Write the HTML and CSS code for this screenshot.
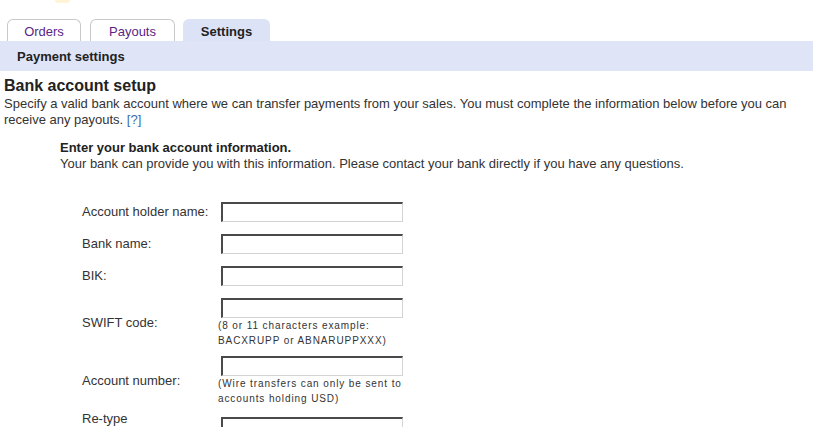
FILE: index.html
```html
<!DOCTYPE html>
<html>
<head>
<meta charset="utf-8">
<title>Payment settings</title>
<link rel="stylesheet" href="styles.css">
</head>
<body>
<div class="top"><span class="logo-bit"></span></div>
<div class="tabs">
  <a class="tab tab-orders">Orders</a>
  <a class="tab tab-payouts">Payouts</a>
  <span class="tab tab-settings active">Settings</span>
</div>
<div class="subbar">Payment settings</div>
<h1 class="title">Bank account setup</h1>
<p class="intro">Specify a valid bank account where we can transfer payments from your sales. You must complete the information below before you can receive any payouts. <a class="help">[?]</a></p>
<div class="section">
  <div class="section-title">Enter your bank account information.</div>
  <div class="section-sub">Your bank can provide you with this information. Please contact your bank directly if you have any questions.</div>
  <div class="form">
    <div class="row">
      <label class="label">Account holder name:</label>
      <div class="field"><input class="input" type="text"></div>
    </div>
    <div class="row">
      <label class="label">Bank name:</label>
      <div class="field"><input class="input" type="text"></div>
    </div>
    <div class="row">
      <label class="label">BIK:</label>
      <div class="field"><input class="input" type="text"></div>
    </div>
    <div class="row row-hint">
      <label class="label">SWIFT code:</label>
      <div class="field"><input class="input" type="text"><div class="hint">(8 or 11 characters example:<br>BACXRUPP or ABNARUPPXXX)</div></div>
    </div>
    <div class="row row-hint2">
      <label class="label">Account number:</label>
      <div class="field"><input class="input" type="text"><div class="hint">(Wire transfers can only be sent to<br>accounts holding USD)</div></div>
    </div>
    <div class="row">
      <label class="label">Re-type<br>account number:</label>
      <div class="field"><input class="input" type="text"></div>
    </div>
  </div>
</div>
</body>
</html>
```
FILE: styles.css
```css
html, body {
  margin: 0;
  padding: 0;
  background: #ffffff;
}
body {
  font-family: "Liberation Sans", Arial, sans-serif;
  font-size: 13px;
  color: #333333;
  overflow: hidden;
}
.top {
  height: 19px;
}
.logo-bit {
  display: block;
  margin-left: 55px;
  width: 15px;
  height: 3px;
  border-radius: 0 0 8px 8px;
  background: #fff5d6;
}
.tabs {
  display: flex;
  padding-left: 7px;
  height: 22px;
}
.tab {
  box-sizing: border-box;
  height: 22px;
  line-height: 23px;
  text-align: center;
  border: 1px solid #c9c9c9;
  border-bottom: none;
  border-radius: 6px 6px 0 0;
  color: #5b1f86;
  background: #ffffff;
  font-size: 13px;
  text-decoration: none;
}
.tab-orders {
  width: 74px;
}
.tab-payouts {
  width: 85px;
  margin-left: 9px;
}
.tab-settings {
  width: 87px;
  margin-left: 8px;
  background: #dde3f6;
  border-color: #dde3f6;
  color: #222222;
  font-weight: bold;
}
.subbar {
  height: 29px;
  line-height: 29px;
  padding-top: 1px;
  background: #dfe4f7;
  padding-left: 17px;
  font-weight: bold;
  color: #222222;
  font-size: 13px;
}
.title {
  margin: 6px 0 0 0;
  padding: 0 4px;
  font-size: 16px;
  line-height: 18px;
  font-weight: bold;
  color: #222222;
}
.intro {
  margin: 1px 0 0 0;
  padding: 0 20px 0 4px;
  line-height: 16px;
}
.help {
  color: #3b6eaa;
  text-decoration: none;
}
.section {
  margin-top: 12px;
  padding-left: 60px;
}
.section-title {
  font-weight: bold;
  color: #222222;
  line-height: 16px;
}
.section-sub {
  line-height: 16px;
}
.form {
  margin-top: 30px;
  padding-left: 22px;
  display: flex;
  flex-direction: column;
}
.row {
  display: flex;
  align-items: center;
  margin-bottom: 12px;
}
.row-hint {
  margin-bottom: 8px;
}
.row-hint2 {
  margin-bottom: 5px;
}
.label {
  width: 136px;
  line-height: 16px;
}
.field {
  display: flex;
  flex-direction: column;
}
.input {
  box-sizing: border-box;
  width: 182px;
  height: 20px;
  margin: 0 0 0 3px;
  padding: 0 2px;
  border-style: solid;
  border-width: 2px 1px 1px 2px;
  border-color: #4a4a4a #d4d4d4 #d4d4d4 #4a4a4a;
  background: #ffffff;
  font-family: "Liberation Sans", Arial, sans-serif;
  font-size: 13px;
}
.hint {
  font-size: 10px;
  line-height: 15px;
  letter-spacing: 0.9px;
  color: #333333;
}
```
